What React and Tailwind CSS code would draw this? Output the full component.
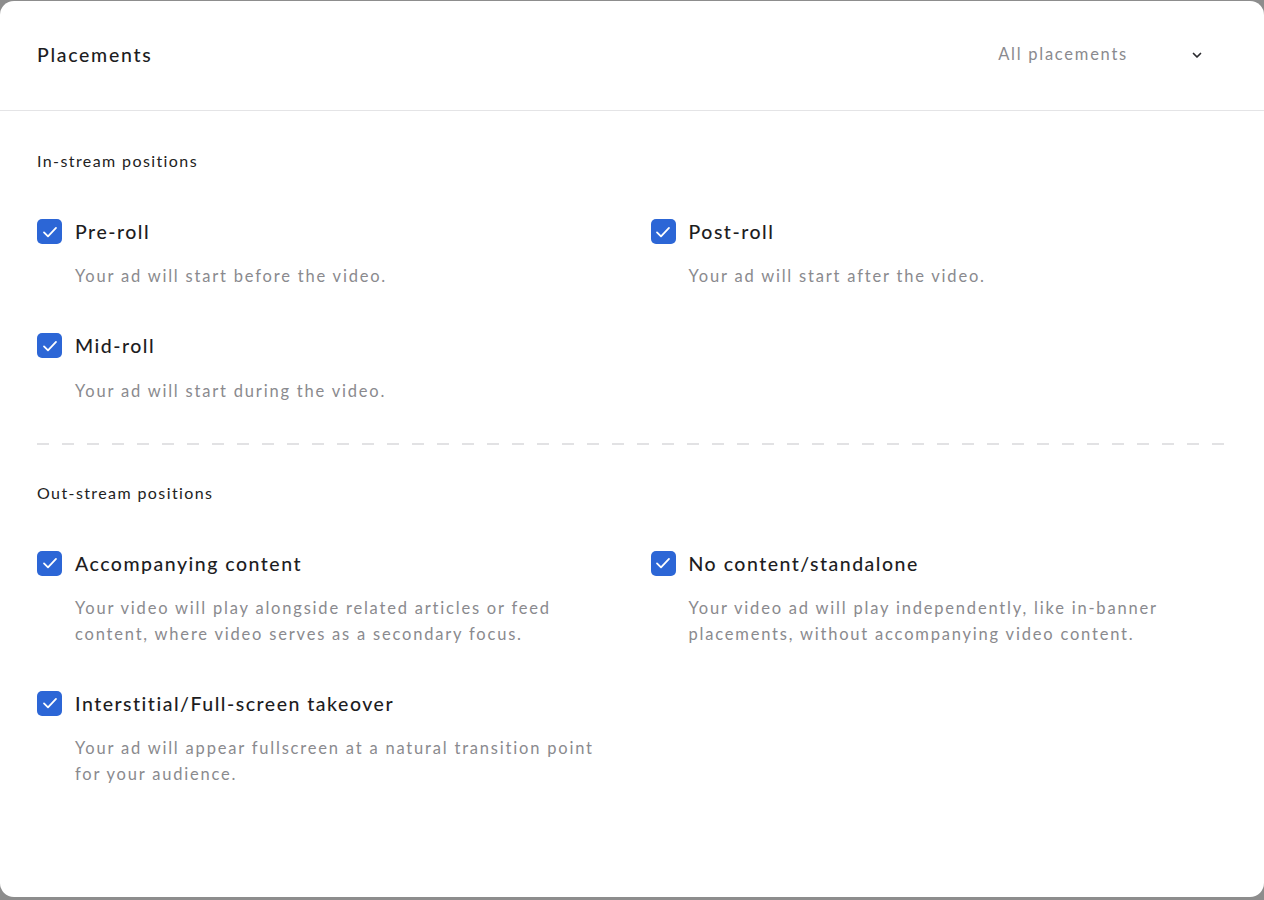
import React from 'react';

// Placements card: two groups of checkbox options split by a dashed rule
const inStream = [
  { title: 'Pre-roll', desc: 'Your ad will start before the video.' },
  { title: 'Post-roll', desc: 'Your ad will start after the video.' },
  { title: 'Mid-roll', desc: 'Your ad will start during the video.' },
];

const outStream = [
  {
    title: 'Accompanying content',
    desc: 'Your video will play alongside related articles or feed content, where video serves as a secondary focus.',
  },
  {
    title: 'No content/standalone',
    desc: 'Your video ad will play independently, like in-banner placements, without accompanying video content.',
  },
  {
    title: 'Interstitial/Full-screen takeover',
    desc: 'Your ad will appear fullscreen at a natural transition point for your audience.',
  },
];

function CheckBox() {
  return (
    <span className="w-[25px] h-[25px] shrink-0 rounded-[5px] bg-[#2c66d6] flex items-center justify-center">
      <svg width="20" height="20" viewBox="0 0 20 20" fill="none">
        <path d="M4 10.4l4 3.9 8-8.4" stroke="white" strokeWidth="1.8" strokeLinecap="round" strokeLinejoin="round" />
      </svg>
    </span>
  );
}

function Option({ title, desc }) {
  return (
    <div className="flex flex-col">
      <div className="flex items-center gap-[13px]">
        <CheckBox />
        <span className="text-[19.5px] font-medium text-[#1d1d1f] tracking-[1.5px]">{title}</span>
      </div>
      <p className="pl-[38px] mt-[17px] max-w-[575px] text-[16.5px] leading-[26px] text-[#8a8a8e] tracking-[1.8px]">
        {desc}
      </p>
    </div>
  );
}

function Group({ label, items }) {
  return (
    <div>
      <p className="text-[16px] text-[#222] tracking-[1.4px] leading-[20px]">{label}</p>
      <div className="grid grid-cols-2 gap-x-[37px] gap-y-[42px] mt-[46px]">
        {items.map((it) => (
          <Option key={it.title} {...it} />
        ))}
      </div>
    </div>
  );
}

export default function App() {
  return (
    <div className="w-[1264px] h-[900px] bg-[#8d8d8d] pt-px" style={{ fontFamily: 'Lato, "Noto Sans", sans-serif' }}>
      <div className="h-[896px] bg-white rounded-[14px] flex flex-col">
        {/* header */}
        <div className="h-[110px] shrink-0 flex items-center justify-between pl-[37px] pr-[60px] pb-[2px] border-b border-[#e4e4e6]">
          <h1 className="text-[19.5px] font-medium text-[#1d1d1f] tracking-[1.7px]">Placements</h1>
          <div className="flex items-center gap-[62px]">
            <span className="text-[16.5px] text-[#8a8a8e] tracking-[1.75px]">All placements</span>
            <svg width="14" height="14" viewBox="0 0 14 14" fill="none">
              <path d="M3.5 5.5L7 9l3.5-3.5" stroke="#2a2a2e" strokeWidth="1.7" strokeLinecap="round" strokeLinejoin="round" />
            </svg>
          </div>
        </div>

        <div className="px-[37px] pt-[40px]">
          <Group label="In-stream positions" items={inStream} />
          <div className="mt-[39px] mb-[38px] h-[2px] bg-[repeating-linear-gradient(to_right,#e2e2e4_0_12px,transparent_12px_25px)]" />
          <Group label="Out-stream positions" items={outStream} />
        </div>
      </div>
    </div>
  );
}
